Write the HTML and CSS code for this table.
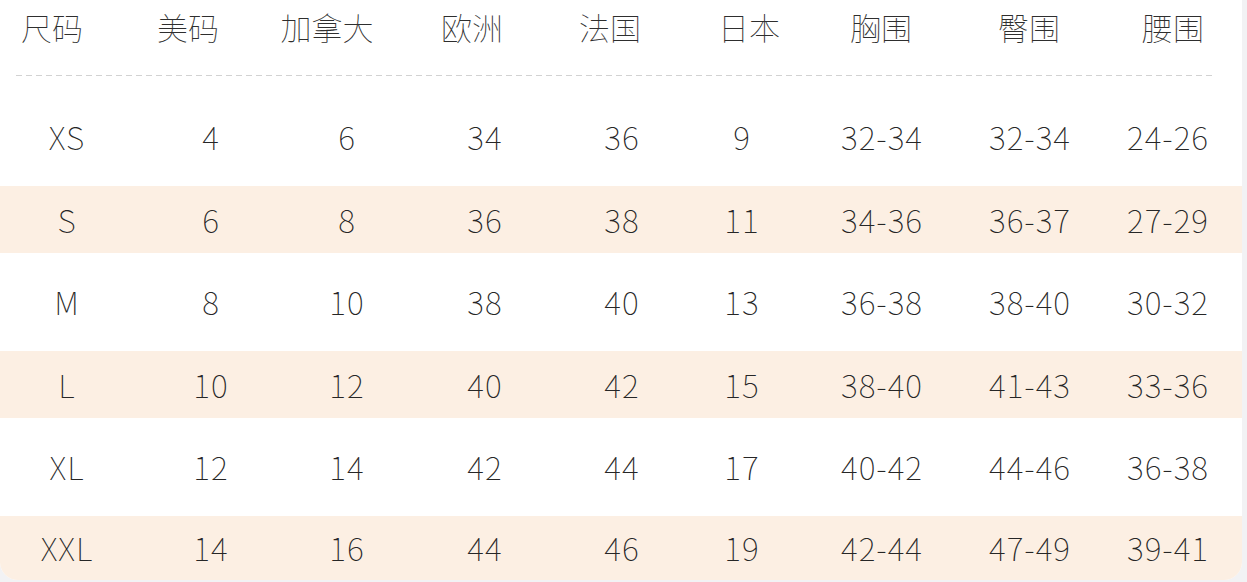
FILE: index.html
```html
<!DOCTYPE html>
<html lang="zh-CN">
<head>
<meta charset="utf-8">
<title>尺码表</title>
<link rel="stylesheet" href="styles.css">
</head>
<body>
<div class="card">
  <div class="head">
    <span>尺码</span><span>美码</span><span>加拿大</span><span>欧洲</span><span>法国</span><span>日本</span><span>胸围</span><span>臀围</span><span>腰围</span>
  </div>
  <div class="divider"></div>
  <div class="row tall"><span>XS</span><span>4</span><span>6</span><span>34</span><span>36</span><span>9</span><span>32-34</span><span>32-34</span><span>24-26</span></div>
  <div class="row band"><span>S</span><span>6</span><span>8</span><span>36</span><span>38</span><span>11</span><span>34-36</span><span>36-37</span><span>27-29</span></div>
  <div class="row tall"><span>M</span><span>8</span><span>10</span><span>38</span><span>40</span><span>13</span><span>36-38</span><span>38-40</span><span>30-32</span></div>
  <div class="row band"><span>L</span><span>10</span><span>12</span><span>40</span><span>42</span><span>15</span><span>38-40</span><span>41-43</span><span>33-36</span></div>
  <div class="row tall"><span>XL</span><span>12</span><span>14</span><span>42</span><span>44</span><span>17</span><span>40-42</span><span>44-46</span><span>36-38</span></div>
  <div class="row band last"><span>XXL</span><span>14</span><span>16</span><span>44</span><span>46</span><span>19</span><span>42-44</span><span>47-49</span><span>39-41</span></div>
</div>
</body>
</html>
```
FILE: styles.css
```css
html, body {
  margin: 0;
  padding: 0;
  background: #f2f2f4;
}
body {
  font-family: "Noto Sans CJK SC", "Noto Sans", sans-serif;
  font-weight: 100;
  color: #333;
}
.card {
  width: 1242px;
  background: #ffffff;
  border-radius: 0 0 18px 18px;
  overflow: hidden;
}
.head {
  display: grid;
  grid-template-columns: 104px 168px 110px 180px 96px 182px 82px 214px 74px;
  height: 52px;
  align-items: center;
  font-size: 31px;
  color: #2e2e2e;
}
.head span, .row span {
  text-align: center;
}
.divider {
  margin: 23px 30px 12px 16px;
  height: 1px;
  background: repeating-linear-gradient(90deg, #d2d2d2 0 6px, transparent 6px 10px);
}
.row {
  display: grid;
  grid-template-columns: 134px 154px 118px 158px 116px 124px 156px 140px 136px;
  align-items: center;
  font-size: 32px;
  letter-spacing: 1px;
  color: #262626;
}
.row span {
  padding-bottom: 2px;
}
.tall {
  height: 98px;
}
.band {
  height: 67px;
  background: #fcefe3;
}
.band.last {
  height: 64px;
}
```
